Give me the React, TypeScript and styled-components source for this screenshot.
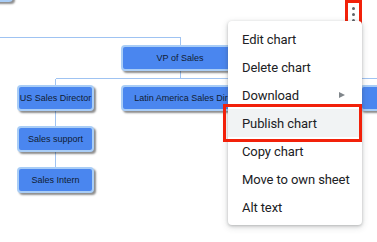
import React from 'react';
import styled, { createGlobalStyle } from 'styled-components';

const GlobalStyle = createGlobalStyle`
  html, body {
    margin: 0;
    padding: 0;
    background: #ffffff;
  }
`;

const Canvas = styled.div`
  position: relative;
  width: 377px;
  height: 242px;
  overflow: hidden;
  background: #ffffff;
  font-family: 'Liberation Sans', Arial, sans-serif;
`;

const Connectors = styled.svg`
  position: absolute;
  left: 0;
  top: 0;
`;

const Node = styled.div<{ $x: number; $y: number; $w: number }>`
  position: absolute;
  left: ${p => p.$x}px;
  top: ${p => p.$y}px;
  width: ${p => p.$w}px;
  height: 26px;
  box-sizing: border-box;
  display: flex;
  align-items: center;
  justify-content: center;
  background: #4a86ef;
  border: 2px solid #a9cdf6;
  border-radius: 4px;
  box-shadow: 2px 2px 2px rgba(0, 0, 0, 0.45);
  color: #101c33;
  font-size: 9px;
  white-space: nowrap;
  overflow: hidden;
`;

const KebabButton = styled.div`
  position: absolute;
  left: 345px;
  top: 0;
  width: 17px;
  height: 29px;
  box-sizing: border-box;
  border: 3px solid #f2210a;
  display: flex;
  flex-direction: column;
  align-items: center;
  justify-content: center;
  gap: 2.5px;
  background: #fff;
`;

const Dot = styled.span`
  width: 3.5px;
  height: 3.5px;
  border-radius: 50%;
  background: #5f6368;
`;

const Menu = styled.div`
  position: absolute;
  left: 228px;
  top: 21px;
  width: 134px;
  padding: 4px 0;
  background: #ffffff;
  border-radius: 4px;
  box-shadow: 0 1px 3px rgba(60, 64, 67, 0.3), 0 2px 6px 1px rgba(60, 64, 67, 0.15);
`;

const MenuItem = styled.div<{ $active?: boolean }>`
  position: relative;
  height: 28px;
  display: flex;
  align-items: center;
  justify-content: space-between;
  padding: 0 17px 0 14px;
  background: ${p => (p.$active ? '#f1f3f4' : 'transparent')};
  color: #202124;
  font-family: Roboto, 'Liberation Sans', Arial, sans-serif;
  font-size: 13px;
  letter-spacing: -0.1px;
  white-space: nowrap;

  ${p =>
    p.$active &&
    `
    &::after {
      content: '';
      position: absolute;
      left: -5px;
      right: 0;
      top: -5px;
      bottom: -5px;
      border: 3px solid #f2210a;
    }
  `}
`;

const SubArrow = styled.span`
  width: 0;
  height: 0;
  border-top: 3.5px solid transparent;
  border-bottom: 3.5px solid transparent;
  border-left: 6px solid #80868b;
`;

const menuItems = [
  { label: 'Edit chart' },
  { label: 'Delete chart' },
  { label: 'Download', sub: true },
  { label: 'Publish chart', active: true },
  { label: 'Copy chart' },
  { label: 'Move to own sheet' },
  { label: 'Alt text' },
];

const nodes = [
  { id: 'top', label: '', x: -80, y: -24, w: 93 },
  { id: 'vp', label: 'VP of Sales', x: 121, y: 45, w: 118 },
  { id: 'us', label: 'US Sales Director', x: 17, y: 85, w: 77 },
  { id: 'latam', label: 'Latin America Sales Director', x: 121, y: 85, w: 140 },
  { id: 'eu', label: '', x: 360, y: 85, w: 90 },
  { id: 'support', label: 'Sales support', x: 17, y: 126, w: 77 },
  { id: 'intern', label: 'Sales Intern', x: 17, y: 167, w: 77 },
];

const App: React.FC = () => {
  return (
    <>
      <GlobalStyle />
      <Canvas>
        <Connectors width={377} height={242}>
          <g stroke="#9fc3f2" strokeWidth={1} fill="none" shapeRendering="crispEdges">
            <path d="M0 37.5 H180.5 V45" />
            <path d="M180.5 70 V78.5" />
            <path d="M55.5 78.5 H377" />
            <path d="M55.5 78.5 V85" />
            <path d="M55.5 111 V126" />
            <path d="M55.5 152 V167" />
          </g>
        </Connectors>

        {nodes.map(n => (
          <Node key={n.id} $x={n.x} $y={n.y} $w={n.w}>
            {n.label}
          </Node>
        ))}

        <KebabButton>
          <Dot />
          <Dot />
          <Dot />
        </KebabButton>

        <Menu>
          {menuItems.map(item => (
            <MenuItem key={item.label} $active={item.active}>
              <span>{item.label}</span>
              {item.sub && <SubArrow />}
            </MenuItem>
          ))}
        </Menu>
      </Canvas>
    </>
  );
};

export default App;
